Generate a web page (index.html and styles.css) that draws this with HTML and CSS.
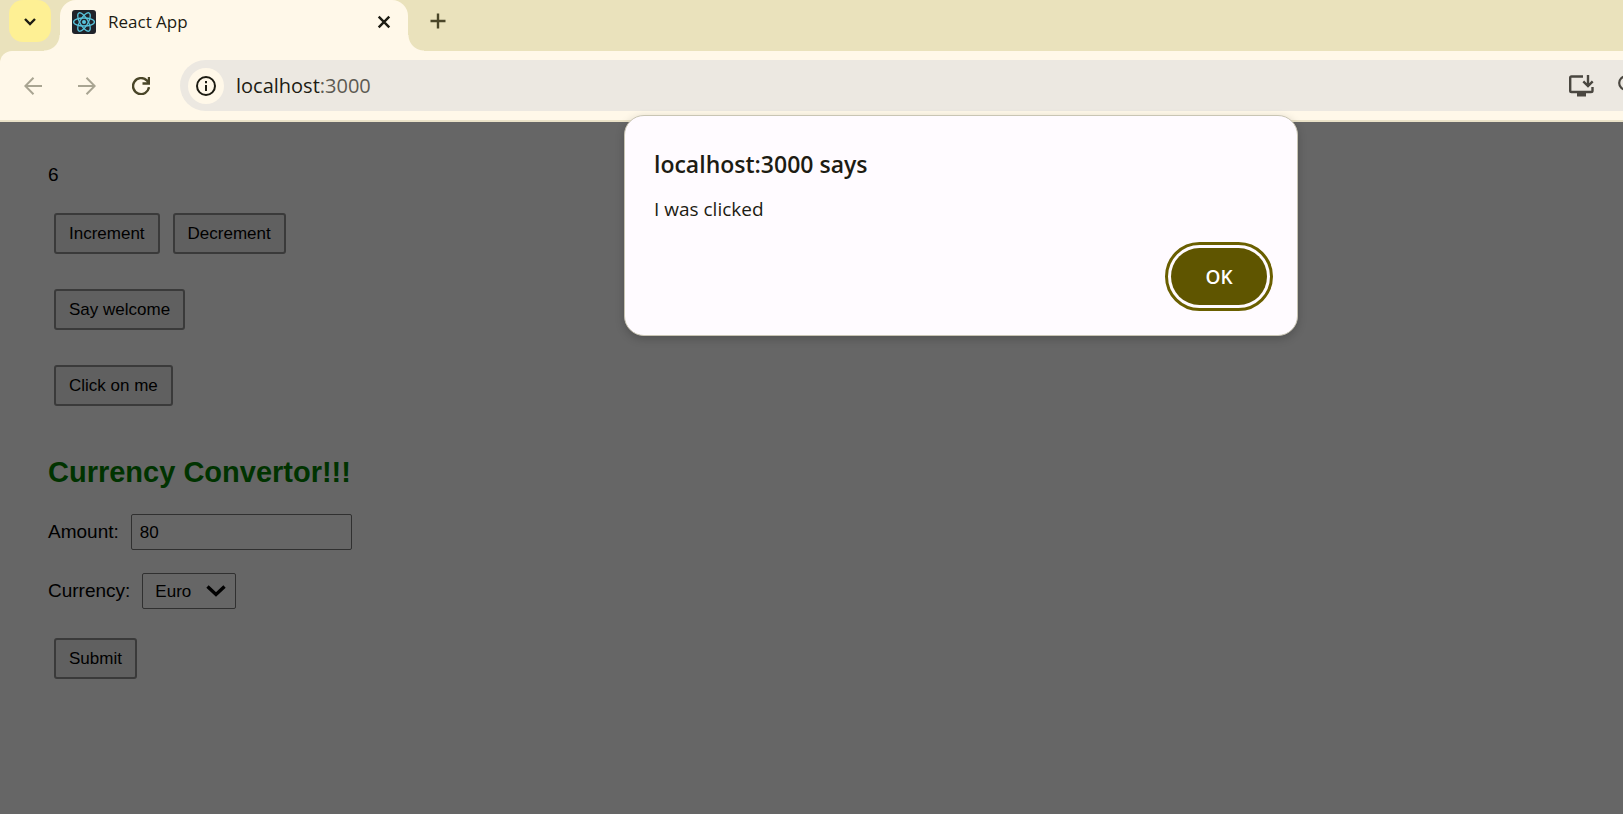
FILE: index.html
```html
<!DOCTYPE html>
<html lang="en">
<head>
<meta charset="utf-8">
<meta name="viewport" content="width=device-width, initial-scale=1">
<title>React App</title>
<link rel="stylesheet" href="styles.css">
</head>
<body>
<div class="browser">
  <header class="chrome">
    <div class="tab-strip">
      <button class="tab-search" type="button" aria-label="Search tabs">
        <svg width="14" height="9" viewBox="0 0 14 9"><path d="M2 2l5 5 5-5" fill="none" stroke="#1d1c13" stroke-width="2.4"/></svg>
      </button>
      <div class="tab">
        <svg class="favicon" width="24" height="24" viewBox="0 0 24 24">
          <rect width="24" height="24" rx="3" fill="#20232a"/>
          <g fill="none" stroke="#58c4dc" stroke-width="1.3">
            <ellipse cx="12" cy="12" rx="10.4" ry="4"/>
            <ellipse cx="12" cy="12" rx="10.4" ry="4" transform="rotate(60 12 12)"/>
            <ellipse cx="12" cy="12" rx="10.4" ry="4" transform="rotate(120 12 12)"/>
          </g>
          <circle cx="12" cy="12" r="2" fill="#58c4dc"/>
        </svg>
        <span class="tab-title">React App</span>
        <button class="tab-close" type="button" aria-label="Close tab">
          <svg width="14" height="14" viewBox="0 0 14 14"><path d="M1.7 1.7l10.6 10.6M12.3 1.7L1.7 12.3" stroke="#1d1c13" stroke-width="2.4"/></svg>
        </button>
      </div>
      <button class="new-tab" type="button" aria-label="New tab">
        <svg width="16" height="16" viewBox="0 0 16 16"><path d="M8 0.500v15M0.500 8h15" stroke="#4a4628" stroke-width="2.400"/></svg>
      </button>
    </div>
    <div class="toolbar">
      <button class="nav-button" type="button" aria-label="Back">
        <svg width="18" height="18" viewBox="0 0 18 18"><path d="M18 9H1.500M9.500 0.800L1.300 9l8.200 8.200" fill="none" stroke="#a9a592" stroke-width="2"/></svg>
      </button>
      <button class="nav-button" type="button" aria-label="Forward">
        <svg width="18" height="18" viewBox="0 0 18 18"><path d="M0 9h16.500M8.500 0.800L16.700 9l-8.200 8.200" fill="none" stroke="#a9a592" stroke-width="2"/></svg>
      </button>
      <button class="nav-button" type="button" aria-label="Reload">
        <svg width="18" height="18" viewBox="0 0 18 18"><path d="M17 10.200A8 8 0 1 1 14.700 3.400L16.500 5.200M17 0v6.500h-6.500" fill="none" stroke="#4a4628" stroke-width="2.400"/></svg>
      </button>
      <div class="address-bar">
        <button class="site-info" type="button" aria-label="View site information">
          <svg width="20" height="20" viewBox="0 0 20 20"><circle cx="10" cy="10" r="9" fill="none" stroke="#1d1c13" stroke-width="2"/><path d="M10 9v6M10 5v2.200" stroke="#1d1c13" stroke-width="2"/></svg>
        </button>
        <span class="url">localhost<span class="port">:3000</span></span>
        <button class="bar-button" type="button" aria-label="Install app">
          <svg width="25" height="22" viewBox="0 0 25 22"><path d="M14 1.500H2.500Q1.200 1.500 1.200 2.800V15.700Q1.200 17 2.500 17H22Q23.500 17 23.500 15.700V12" fill="none" stroke="#4a4740" stroke-width="2.400"/><path d="M8 17h9v4.500H8z" fill="#4a4740"/><path d="M19 0v10.500M14.300 6.300L19 11l4.700-4.700" fill="none" stroke="#4a4740" stroke-width="2.400"/></svg>
        </button>
        <button class="bar-button bar-search" type="button" aria-label="Zoom">
          <svg width="22" height="22" viewBox="0 0 22 22"><circle cx="8" cy="8" r="6.800" fill="none" stroke="#4a4740" stroke-width="2.200"/><path d="M13 13l7 7" stroke="#4a4740" stroke-width="2.200"/></svg>
        </button>
      </div>
    </div>
  </header>
  <main class="page">
    <p class="count">6</p>
    <div class="row">
      <button class="button" type="button">Increment</button>
      <button class="button" type="button">Decrement</button>
    </div>
    <div class="row"><button class="button" type="button">Say welcome</button></div>
    <div class="row"><button class="button" type="button">Click on me</button></div>
    <h2 class="heading">Currency Convertor!!!</h2>
    <form class="form">
      <div class="field">
        <label for="amount">Amount:</label>
        <input class="amount" id="amount" type="text" value="80">
      </div>
      <div class="field">
        <label for="currency">Currency:</label>
        <span class="select-wrap">
          <select class="currency" id="currency"><option>Euro</option></select>
          <svg class="chevron" width="20" height="12" viewBox="0 0 20 12"><path d="M1.500 1.500L10 9.500l8.500-8" fill="none" stroke="#000" stroke-width="3.400"/></svg>
        </span>
      </div>
      <div class="row"><button class="button" type="button">Submit</button></div>
    </form>
  </main>
  <div class="dialog" role="alertdialog" aria-labelledby="dialog-title" aria-describedby="dialog-text">
    <h1 class="dialog-title" id="dialog-title">localhost:3000 says</h1>
    <p class="dialog-text" id="dialog-text">I was clicked</p>
    <button class="ok" type="button">OK</button>
  </div>
</div>
</body>
</html>
```
FILE: styles.css
```css
* { box-sizing: border-box; }

body {
  margin: 0;
  font-family: "Open Sans", "Noto Sans", sans-serif;
  color: #1d1c13;
}

button, input, select { font: inherit; color: inherit; }
svg { display: block; }

.browser {
  position: relative;
  display: flex;
  flex-direction: column;
  min-height: 100vh;
  overflow: hidden;
}

.chrome { background: #eae2bc; }

.tab-strip {
  display: flex;
  height: 51px;
  padding-left: 9px;
}

.tab-search {
  display: grid;
  place-items: center;
  width: 42px;
  height: 42px;
  padding: 0;
  border: 0;
  border-radius: 14px;
  background: #fef094;
}

.tab {
  position: relative;
  display: flex;
  align-items: center;
  gap: 12px;
  width: 348px;
  margin-left: 9px;
  padding: 0 17px 8px 12px;
  border-radius: 16px 16px 0 0;
  background: #fff8e9;
}

/* Curved feet that join the active tab to the toolbar */
.tab::before, .tab::after {
  content: "";
  position: absolute;
  bottom: 0;
  width: 16px;
  height: 16px;
}
.tab::before {
  right: 100%;
  background: radial-gradient(circle at 0 0, transparent 15px, #fff8e9 16px);
}
.tab::after {
  left: 100%;
  background: radial-gradient(circle at 100% 0, transparent 15px, #fff8e9 16px);
}

.tab-title { flex: 1; font-size: 17px; line-height: 24px; }

.tab-close, .new-tab, .nav-button, .bar-button {
  display: grid;
  place-items: center;
  padding: 0;
  border: 0;
  background: transparent;
}

.new-tab { width: 42px; height: 42px; margin-left: 9px; }

.toolbar {
  display: flex;
  align-items: center;
  height: 71px;
  padding-left: 6px;
  border-bottom: 2px solid #eae2c8;
  border-radius: 12px 0 0 0;
  background: #fff8e9;
}

.nav-button { width: 54px; height: 42px; }

.address-bar {
  display: flex;
  flex: 1;
  align-items: center;
  height: 51px;
  margin-left: 12px;
  padding-left: 8px;
  border-radius: 26px 0 0 26px;
  background: #ece8e1;
  overflow: hidden;
}

.site-info {
  display: grid;
  place-items: center;
  width: 36px;
  height: 36px;
  padding: 0;
  border: 0;
  border-radius: 50%;
  background: #fff8e9;
}

.url { flex: 1; margin-left: 12px; font-size: 20px; line-height: 28px; }
.port { color: #5c5a52; }
.bar-button { flex: none; }
.bar-search { width: 22px; margin: 0 -17px 0 24px; }

.page {
  flex: 1;
  padding: 40px 48px;
  background: #666;
  color: #000;
  font-family: "Liberation Sans", Arial, sans-serif;
  font-size: 19px;
  line-height: 26px;
}

.count { margin: 0 0 25px; }

.row {
  display: flex;
  gap: 13px;
  margin-bottom: 35px;
  padding-left: 6px;
}

.button {
  height: 41px;
  padding: 1px 13px 0;
  border: 2px solid #3a3a3a;
  border-radius: 3px;
  background: #606060;
  font-size: 17px;
}

.heading {
  margin: 49px 0 25px;
  color: #003300;
  font-size: 29px;
  line-height: 34px;
}

.field {
  display: flex;
  align-items: center;
  gap: 12px;
  margin-bottom: 23px;
}
.field + .row { margin-top: 29px; }

.amount, .currency {
  height: 36px;
  border: 1px solid #303030;
  border-radius: 2px;
  background: #666;
  font-size: 17px;
}
.amount { width: 221px; padding: 2px 8px 0; }

.select-wrap { position: relative; }
.currency {
  display: block;
  width: 94px;
  padding: 2px 12px 0;
  appearance: none;
}
.chevron {
  position: absolute;
  top: 12px;
  right: 10px;
  pointer-events: none;
}

.dialog {
  position: absolute;
  top: 115px;
  left: 624px;
  display: flex;
  flex-direction: column;
  width: 674px;
  padding: 32px 30px 30px 29px;
  border: 1px solid #c9c5b4;
  border-radius: 20px;
  background: #fffbff;
  box-shadow: 0 3px 10px rgba(0, 0, 0, 0.2);
}

.dialog-title { margin: 0; font-size: 23px; font-weight: 600; line-height: 32px; }
.dialog-text { margin: 17px 0 27px; font-size: 19px; line-height: 24px; }

.ok {
  align-self: flex-end;
  width: 96px;
  height: 57px;
  padding: 0;
  border: 0;
  border-radius: 29px;
  outline: 3px solid #6a5f00;
  outline-offset: 3px;
  background: #5f5500;
  color: #fff;
  font-size: 19px;
  font-weight: 600;
}
```
